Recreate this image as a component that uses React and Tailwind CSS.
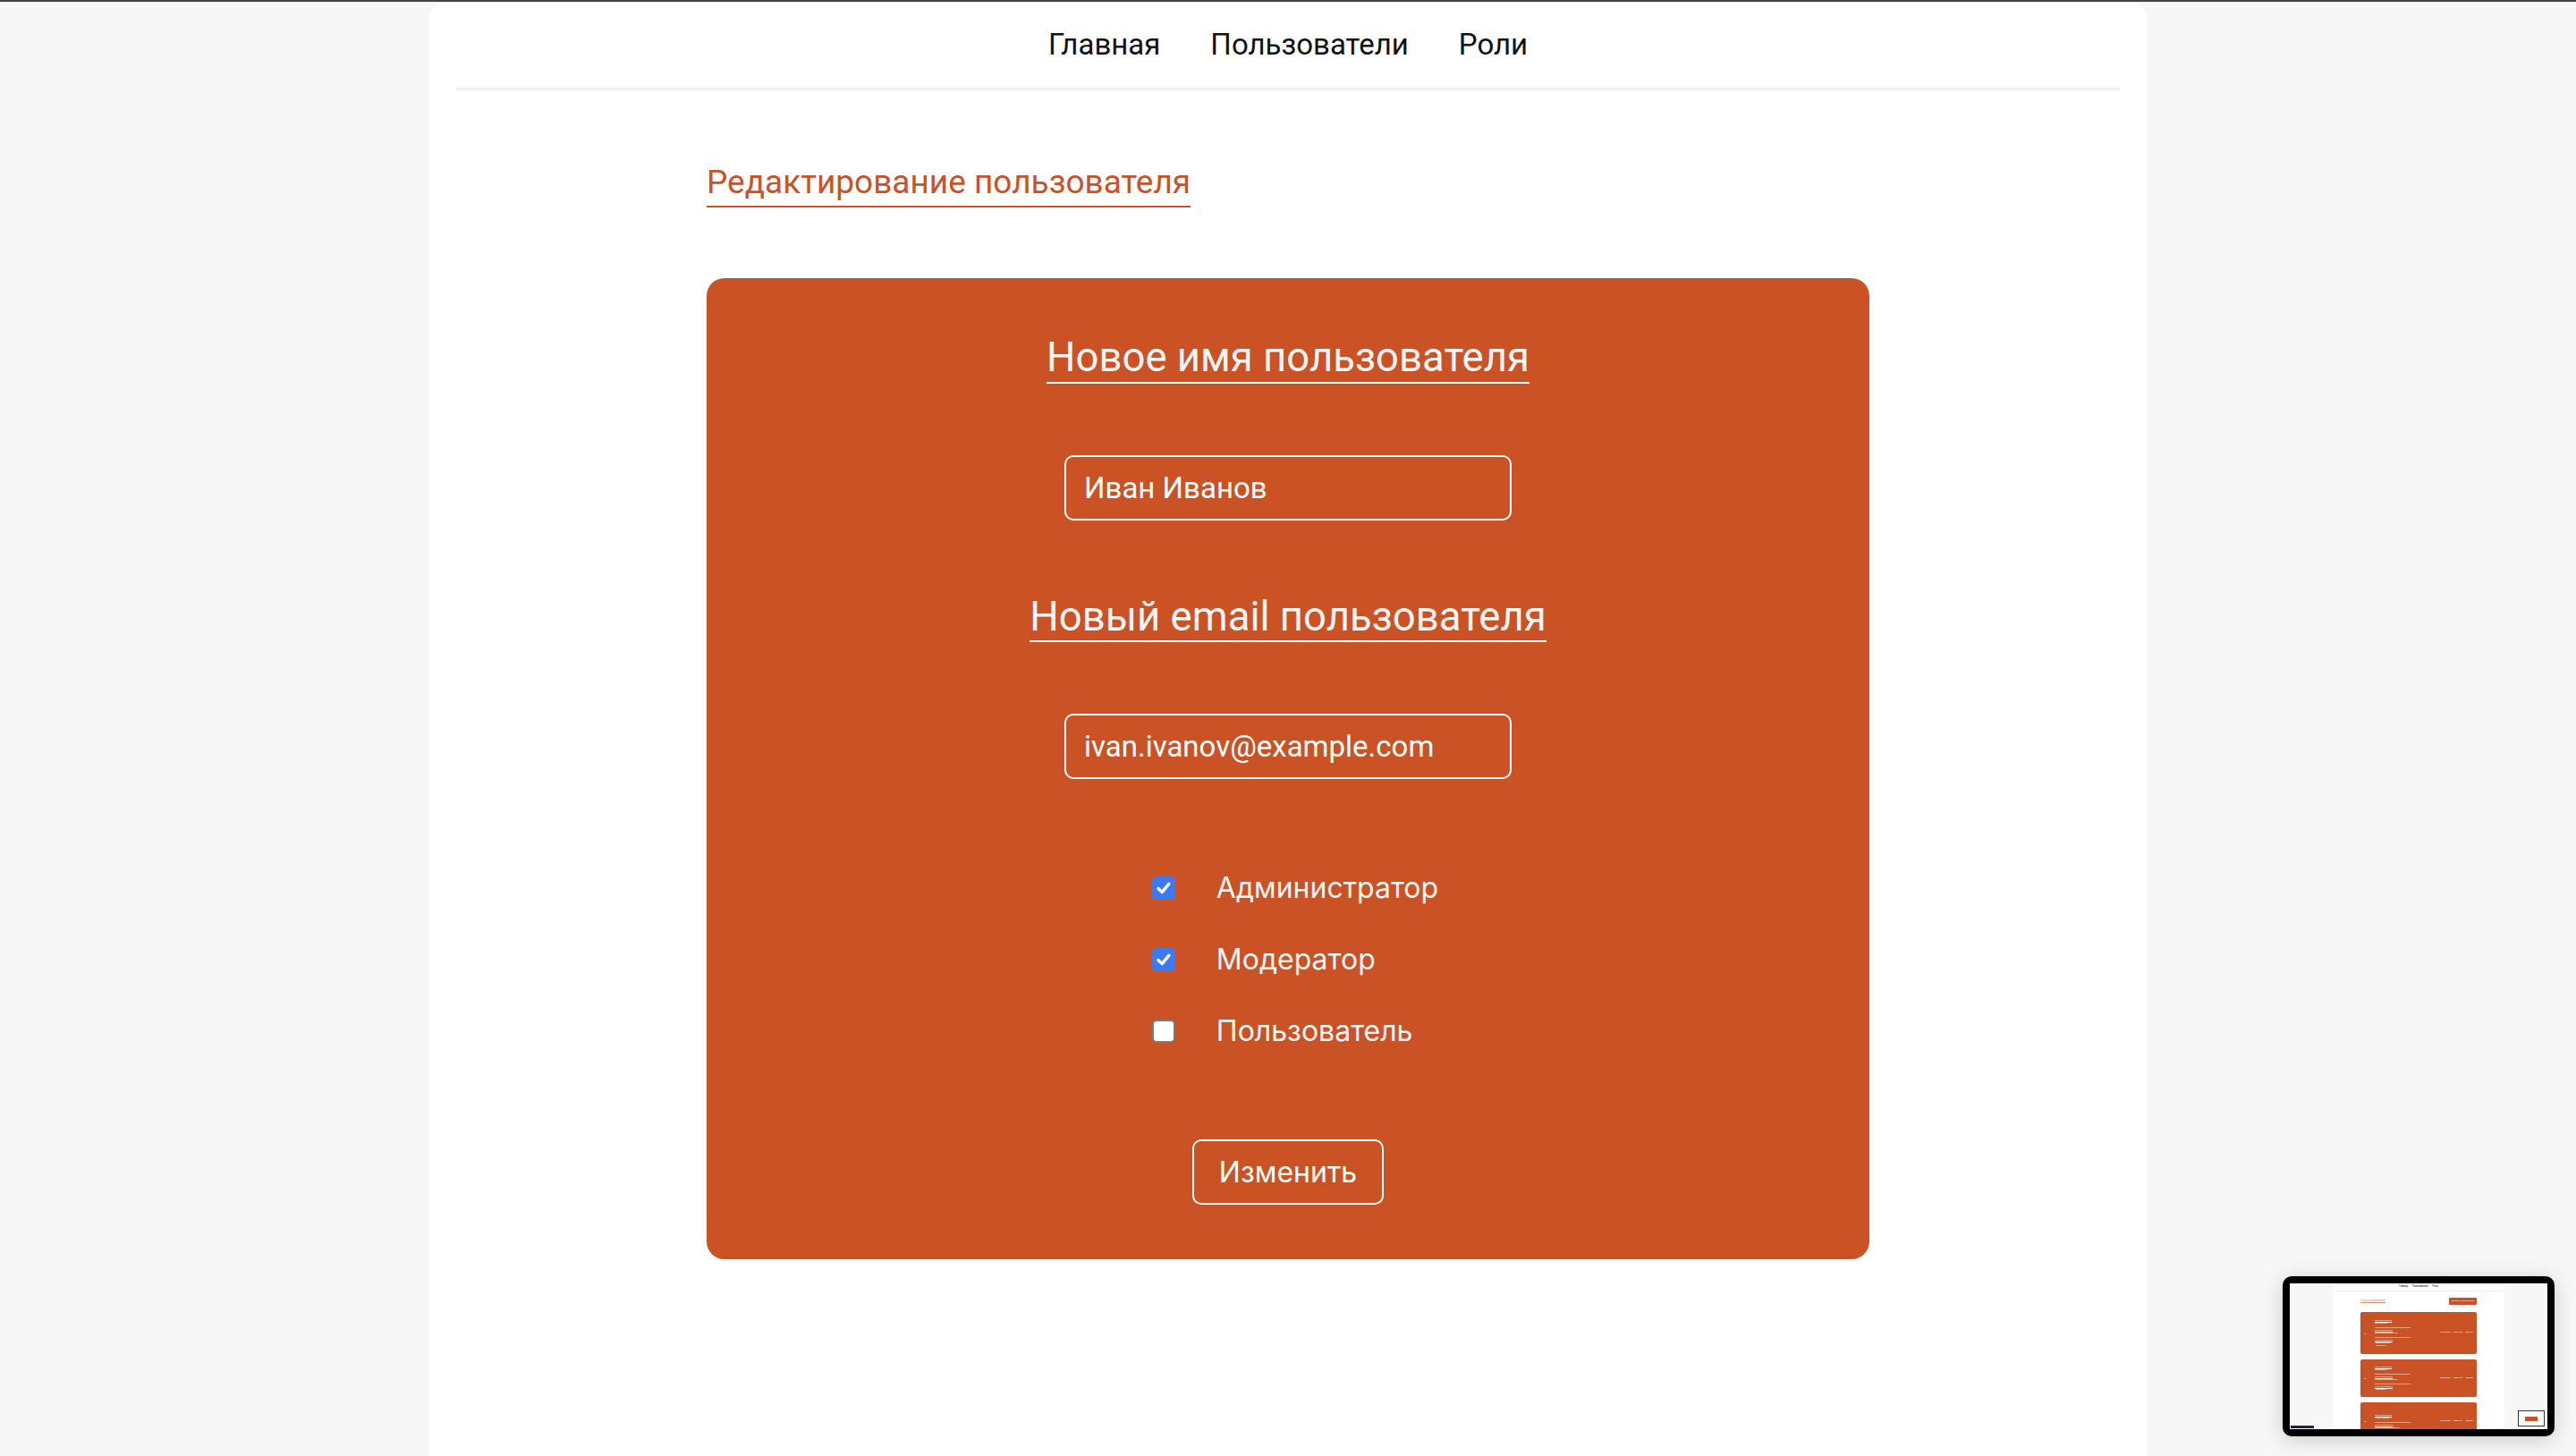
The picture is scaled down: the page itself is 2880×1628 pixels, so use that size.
import { useState } from 'react';

const roboto = { fontFamily: 'Roboto, "Liberation Sans", sans-serif' };
const inter = { fontFamily: 'Inter, "Liberation Sans", sans-serif' };

function Checkbox({ checked, onChange }) {
  return (
    <button
      type="button"
      onClick={onChange}
      className={`w-[26px] h-[26px] rounded-[5px] flex items-center justify-center shrink-0 ${
        checked ? 'bg-[#3a7bf5]' : 'bg-white border-2 border-[#7a7a7a]'
      }`}
    >
      {checked && (
        <svg width="22" height="22" viewBox="0 0 22 22" fill="none">
          <path d="M5 11.5 L9.2 15.6 L17 6.2" stroke="white" strokeWidth="3.4" strokeLinecap="round" strokeLinejoin="round" />
        </svg>
      )}
    </button>
  );
}

function MiniCard({ name, email, roles, h }) {
  return (
    <div className={`bg-[#ca5224] rounded-[2px] flex items-center px-[4px] text-white ${h}`}>
      <div className="w-[12px] text-[2px] leading-none">id 1</div>
      <div className="flex flex-col gap-[3px] text-[2.2px] leading-[3px] w-[40px]">
        <div>
          <div className="underline">Имя пользователя</div>
          <div>{name}</div>
        </div>
        <div className="border-t-[0.5px] border-[#e7a48a] pt-[1px]">
          <div className="underline">Email пользователя</div>
          <div>{email}</div>
        </div>
        {roles && (
          <div className="border-t-[0.5px] border-[#e7a48a] pt-[1px]">
            <div className="underline">Роли пользователя</div>
            {roles.map(r => <div key={r}>· {r}</div>)}
          </div>
        )}
      </div>
      <div className="flex-1 flex justify-end gap-[3px] text-[2.2px] leading-none">
        <span>Посмотреть</span><span>Изменить</span><span>Удалить</span>
      </div>
    </div>
  );
}

function Thumbnail() {
  return (
    <div className="absolute left-[2552px] top-[1425px] w-[304px] h-[179px] bg-black rounded-[10px] p-[8px] shadow-[0_4px_24px_rgba(0,0,0,0.18)]">
      <div className="relative w-full h-full bg-[#f7f7f7] overflow-hidden" style={roboto}>
        <div className="mx-auto w-[192px] h-full bg-white px-[4px]">
          <div className="h-[9px] flex items-center justify-center gap-[5px] text-[2.6px] text-black border-b-[0.5px] border-[#eee]">
            <span>Главная</span><span>Пользователи</span><span>Роли</span>
          </div>
          <div className="w-[130px] mx-auto">
            <div className="flex items-center justify-between mt-[7px] h-[8px]">
              <span className="text-[2.6px] text-[#d98a6c] underline">Список пользователей</span>
              <span className="bg-[#ca5224] text-white text-[2.2px] px-[3px] h-[8px] flex items-center rounded-[1px]">Добавить пользователя</span>
            </div>
            <div className="flex flex-col gap-[6px] mt-[8px]">
              <MiniCard h="h-[47px]" name="Иван Иванов" email="ivan.ivanov@example.com" roles={['Администратор', 'Модератор']} />
              <MiniCard h="h-[42px]" name="Петр Петров" email="petr.petrov@example.com" roles={['Модератор']} />
              <MiniCard h="h-[42px]" name="Сидор Сидоров" email="sidor.sidorov@example.com" />
            </div>
          </div>
        </div>
        <div className="absolute left-[255px] top-[142px] w-[30px] h-[18px] bg-white border border-[#333] flex items-center justify-center">
          <div className="w-[14px] h-[5px] bg-[#ca5224]" />
        </div>
        <div className="absolute left-[1px] bottom-[1px] w-[26px] h-[3px] bg-[#1c2833]" />
      </div>
    </div>
  );
}

export default function App() {
  const [roles, setRoles] = useState({ admin: true, moder: true, user: false });
  const [name, setName] = useState('Иван Иванов');
  const [email, setEmail] = useState('ivan.ivanov@example.com');

  const roleList = [
    { key: 'admin', label: 'Администратор' },
    { key: 'moder', label: 'Модератор' },
    { key: 'user', label: 'Пользователь' },
  ];

  return (
    <div className="relative min-h-screen bg-[#f7f7f7] border-t-2 border-[#3f4347]">
      <div className="mx-auto max-w-[1920px] min-h-[1626px] bg-white rounded-t-[18px] px-[30px]">
        {/* Nav */}
        <nav className="h-[99px] flex items-center justify-center gap-[56px] border-b-[3px] border-[#f0f0f0] text-[33px] text-[#111]" style={roboto}>
          <a href="#">Главная</a>
          <a href="#">Пользователи</a>
          <a href="#">Роли</a>
        </nav>

        <div className="w-[1300px] mx-auto">
          <h1 className="inline-block mt-[84px] pb-[8px] border-b-2 border-[#c9522a] text-[37px] leading-none text-[#c9522a]" style={roboto}>
            Редактирование пользователя
          </h1>

          {/* Form card */}
          <form
            onSubmit={e => e.preventDefault()}
            className="mt-[79px] w-[1300px] rounded-[20px] bg-[#ca5224] flex flex-col items-center pt-[66px] pb-[61px] text-[#f6f6f6]"
          >
            <h2 className="pb-[4px] border-b-2 border-white text-[45.5px] leading-none" style={roboto}>
              Новое имя пользователя
            </h2>
            <input
              value={name}
              onChange={e => setName(e.target.value)}
              className="mt-[80px] w-[500px] h-[73px] rounded-[10px] border-2 border-white bg-transparent px-[20px] text-[33px] text-white outline-none"
              style={roboto}
            />

            <h2 className="mt-[85px] pb-[4px] border-b-2 border-white text-[45.5px] leading-none" style={roboto}>
              Новый email пользователя
            </h2>
            <input
              value={email}
              onChange={e => setEmail(e.target.value)}
              className="mt-[80px] w-[500px] h-[73px] rounded-[10px] border-2 border-white bg-transparent px-[20px] text-[33px] text-white outline-none"
              style={roboto}
            />

            <div className="mt-[82px] pl-[16px] flex flex-col" style={inter}>
              {roleList.map(r => (
                <label key={r.key} className="h-[80px] flex items-center gap-[46px] text-[32px] cursor-pointer">
                  <Checkbox checked={roles[r.key]} onChange={() => setRoles({ ...roles, [r.key]: !roles[r.key] })} />
                  <span>{r.label}</span>
                </label>
              ))}
            </div>

            <button
              type="submit"
              className="mt-[81px] w-[214px] h-[73px] rounded-[10px] border-2 border-white text-[32px] text-white"
              style={inter}
            >
              Изменить
            </button>
          </form>
        </div>
      </div>
      <Thumbnail />
    </div>
  );
}
